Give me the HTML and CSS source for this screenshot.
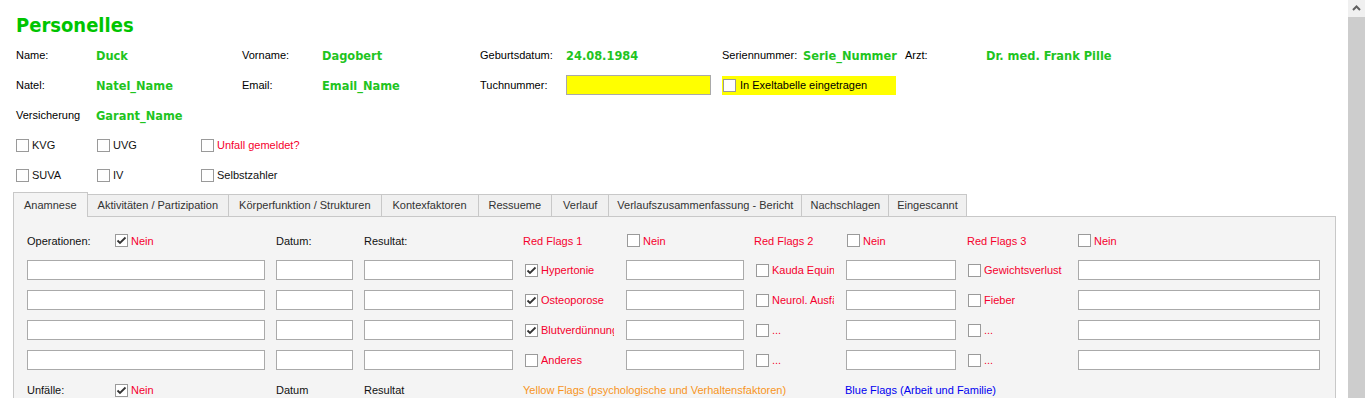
FILE: index.html
```html
<!DOCTYPE html>
<html lang="de">
  <head>
    <meta charset="UTF-8" />
    <meta name="viewport" content="width=device-width, initial-scale=1.0" />
    <title>Personelles</title>
    <link rel="stylesheet" href="styles.css">
  </head>
  <body>
    <div class="window">
      <main class="form">
        <h1 class="title">Personelles</h1>

        <div class="info">
          <span class="lbl">Name:</span><span class="val">Duck</span>
          <span class="lbl">Vorname:</span><span class="val">Dagobert</span>
          <span class="lbl">Geburtsdatum:</span><span class="val">24.08.1984</span>
          <span class="lbl">Seriennummer:</span><span class="val">Serie_Nummer</span>
          <span class="lbl">Arzt:</span><span class="val">Dr. med. Frank Pille</span>

          <span class="lbl">Natel:</span><span class="val">Natel_Name</span>
          <span class="lbl">Email:</span><span class="val">Email_Name</span>
          <span class="lbl">Tuchnummer:</span><span class="cell"><input class="field-yellow" type="text"></span>
          <span class="excel"><span class="cb"></span>In Exeltabelle eingetragen</span>

          <span class="lbl new-row">Versicherung</span><span class="val">Garant_Name</span>
        </div>

        <div class="insure">
          <span class="check"><span class="cb"></span>KVG</span>
          <span class="check"><span class="cb"></span>UVG</span>
          <span class="check red"><span class="cb"></span>Unfall gemeldet?</span>
          <span class="check"><span class="cb"></span>SUVA</span>
          <span class="check"><span class="cb"></span>IV</span>
          <span class="check"><span class="cb"></span>Selbstzahler</span>
        </div>

        <nav class="tabs">
          <div class="tab active">Anamnese</div>
          <div class="tab">Aktivitäten / Partizipation</div>
          <div class="tab">Körperfunktion / Strukturen</div>
          <div class="tab wide">Kontexfaktoren</div>
          <div class="tab">Ressueme</div>
          <div class="tab wide">Verlauf</div>
          <div class="tab slim">Verlaufszusammenfassung - Bericht</div>
          <div class="tab slim">Nachschlagen</div>
          <div class="tab slim">Eingescannt</div>
        </nav>

        <section class="panel">
          <div class="grid">
            <!-- header row -->
            <span class="head-cell"><span class="head-lbl">Operationen:</span><span class="check red"><span class="cb on"><svg viewBox="0 0 11 11"><path d="M1.5 5.5 L4 8 L9.5 2.5"/></svg></span>Nein</span></span>
            <span class="txt">Datum:</span>
            <span class="txt">Resultat:</span>
            <span class="txt red">Red Flags 1</span>
            <span class="check red pad1"><span class="cb"></span>Nein</span>
            <span class="txt red">Red Flags 2</span>
            <span class="check red pad1"><span class="cb"></span>Nein</span>
            <span class="txt red">Red Flags 3</span>
            <span class="check red"><span class="cb"></span>Nein</span>

            <!-- row 1 -->
            <input class="in-op" type="text"><input class="in-date" type="text"><input class="in-res" type="text">
            <span class="flag f1"><span class="cb on"><svg viewBox="0 0 11 11"><path d="M1.5 5.5 L4 8 L9.5 2.5"/></svg></span><span class="flag-txt">Hypertonie</span></span>
            <input class="in-f1" type="text">
            <span class="flag f2"><span class="cb"></span><span class="flag-txt">Kauda Equina</span></span>
            <input class="in-f2" type="text">
            <span class="flag f3"><span class="cb"></span><span class="flag-txt">Gewichtsverlust</span></span>
            <input class="in-f3" type="text">

            <!-- row 2 -->
            <input class="in-op" type="text"><input class="in-date" type="text"><input class="in-res" type="text">
            <span class="flag f1"><span class="cb on"><svg viewBox="0 0 11 11"><path d="M1.5 5.5 L4 8 L9.5 2.5"/></svg></span><span class="flag-txt">Osteoporose</span></span>
            <input class="in-f1" type="text">
            <span class="flag f2"><span class="cb"></span><span class="flag-txt">Neurol. Ausfälle</span></span>
            <input class="in-f2" type="text">
            <span class="flag f3"><span class="cb"></span><span class="flag-txt">Fieber</span></span>
            <input class="in-f3" type="text">

            <!-- row 3 -->
            <input class="in-op" type="text"><input class="in-date" type="text"><input class="in-res" type="text">
            <span class="flag f1"><span class="cb on"><svg viewBox="0 0 11 11"><path d="M1.5 5.5 L4 8 L9.5 2.5"/></svg></span><span class="flag-txt">Blutverdünnung</span></span>
            <input class="in-f1" type="text">
            <span class="flag f2"><span class="cb"></span><span class="flag-txt">...</span></span>
            <input class="in-f2" type="text">
            <span class="flag f3"><span class="cb"></span><span class="flag-txt">...</span></span>
            <input class="in-f3" type="text">

            <!-- row 4 -->
            <input class="in-op" type="text"><input class="in-date" type="text"><input class="in-res" type="text">
            <span class="flag f1"><span class="cb"></span><span class="flag-txt">Anderes</span></span>
            <input class="in-f1" type="text">
            <span class="flag f2"><span class="cb"></span><span class="flag-txt">...</span></span>
            <input class="in-f2" type="text">
            <span class="flag f3"><span class="cb"></span><span class="flag-txt">...</span></span>
            <input class="in-f3" type="text">

            <!-- footer row -->
            <span class="head-cell"><span class="head-lbl">Unfälle:</span><span class="check red"><span class="cb on"><svg viewBox="0 0 11 11"><path d="M1.5 5.5 L4 8 L9.5 2.5"/></svg></span>Nein</span></span>
            <span class="txt">Datum</span>
            <span class="txt">Resultat</span>
            <span class="txt yellow">Yellow Flags (psychologische und Verhaltensfaktoren)</span>
            <span class="txt blue">Blue Flags (Arbeit und Familie)</span>
          </div>
        </section>
      </main>

      <div class="scrollbar">
        <div class="scroll-up">
          <svg viewBox="0 0 17 17"><path d="M5 10 L8.5 6.5 L12 10"/></svg>
        </div>
      </div>
    </div>
  </body>
</html>
```

FILE: styles.css
```css
* {
  margin: 0;
  padding: 0;
  box-sizing: border-box;
}

body {
  font-family: "Liberation Sans", Arial, sans-serif;
  font-size: 11px;
  color: #111;
  background: #fff;
  height: 398px;
  overflow: hidden;
}

.window {
  display: flex;
  height: 100%;
}

.form {
  flex: 1;
  padding-left: 13px;
  padding-right: 12px;
  overflow: hidden;
}

.title {
  font-family: "DejaVu Sans", sans-serif;
  font-stretch: condensed;
  font-size: 20px;
  line-height: 24px;
  font-weight: bold;
  color: #00c400;
  margin: 13px 0 3px 3px;
}

/* top info block */
.info {
  display: grid;
  grid-template-columns: 80px 146px 80px 158px 86px 156px 81px 102px 81px auto;
  grid-auto-rows: 30px;
  align-items: center;
  padding-left: 3px;
}

.lbl {
  color: #000;
}

.new-row {
  grid-column-start: 1;
}

.val {
  font-family: "DejaVu Sans", sans-serif;
  font-stretch: condensed;
  font-weight: bold;
  font-size: 12.7px;
  color: #1fc41f;
  white-space: nowrap;
}

.cell {
  display: flex;
}

.field-yellow {
  width: 145px;
  height: 20px;
  background: #ffff00;
  border: 1px solid #a9a9a9;
  outline: none;
}

.excel {
  grid-column: span 2;
  width: 174px;
  height: 19px;
  background: #ffff00;
  display: flex;
  align-items: center;
  gap: 4px;
  padding-left: 1px;
  color: #000;
}

/* checkboxes */
.cb {
  width: 13px;
  height: 13px;
  border: 1px solid #9a9a9a;
  background: #fff;
  display: inline-flex;
  align-items: center;
  justify-content: center;
  flex: none;
}

.cb svg {
  width: 11px;
  height: 11px;
  fill: none;
  stroke: #333;
  stroke-width: 1.8;
}

.check {
  display: flex;
  align-items: center;
  gap: 3px;
  white-space: nowrap;
}

.red {
  color: #f5002d;
}

.insure {
  display: grid;
  grid-template-columns: 81px 104px auto;
  grid-auto-rows: 30px;
  align-items: center;
  padding-left: 3px;
}

/* tabs */
.tabs {
  display: flex;
  align-items: flex-end;
  height: 26px;
}

.tab {
  height: 22px;
  line-height: 20px;
  padding: 0 10px;
  background: #f0f0f0;
  border: 1px solid #c8c8c8;
  border-bottom: none;
  border-left: none;
  color: #333;
  white-space: nowrap;
}

.tab.wide {
  padding: 0 11px;
}

.tab.slim {
  padding: 0 8px;
}

.tab.active {
  height: 25px;
  line-height: 24px;
  background: #f4f4f4;
  border-left: 1px solid #c8c8c8;
  margin-bottom: -1px;
  position: relative;
  z-index: 1;
}

.panel {
  background: #f4f4f4;
  border: 1px solid #c8c8c8;
  border-bottom: none;
  height: 200px;
  padding: 9px 0 0 13px;
}

.grid {
  display: grid;
  grid-template-columns: 249px 88px 159px 103px 128px 92px 121px 111px 242px;
  grid-template-rows: 29px repeat(4, 30px) 30px;
  align-items: center;
}

.head-cell {
  display: flex;
  align-items: center;
}

.head-lbl {
  width: 88px;
}

.pad1 {
  padding-left: 1px;
}

.txt {
  white-space: nowrap;
}

.yellow {
  color: #f7941d;
  grid-column: span 3;
}

.blue {
  color: #0000f0;
  margin-left: -1px;
}

input {
  height: 20px;
  border: 1px solid #aaa;
  background: #fff;
  font: inherit;
  outline: none;
}

.in-op { width: 238px; }
.in-date { width: 77px; }
.in-res { width: 149px; }
.in-f1 { width: 118px; }
.in-f2 { width: 110px; }
.in-f3 { width: 242px; }

.flag {
  display: flex;
  align-items: center;
  gap: 3px;
  color: #f5002d;
  padding-left: 2px;
}

.flag-txt {
  overflow: hidden;
  white-space: nowrap;
}

.f1 .flag-txt { width: 73px; }
.f2 .flag-txt { width: 62px; }
.f3 { padding-left: 1px; }

/* scrollbar */
.scrollbar {
  width: 17px;
  flex: none;
  background: #cdcdcd;
}

.scroll-up {
  height: 17px;
  background: #f0f0f0;
}

.scroll-up svg {
  width: 17px;
  height: 17px;
  fill: none;
  stroke: #606060;
  stroke-width: 2;
}
```
